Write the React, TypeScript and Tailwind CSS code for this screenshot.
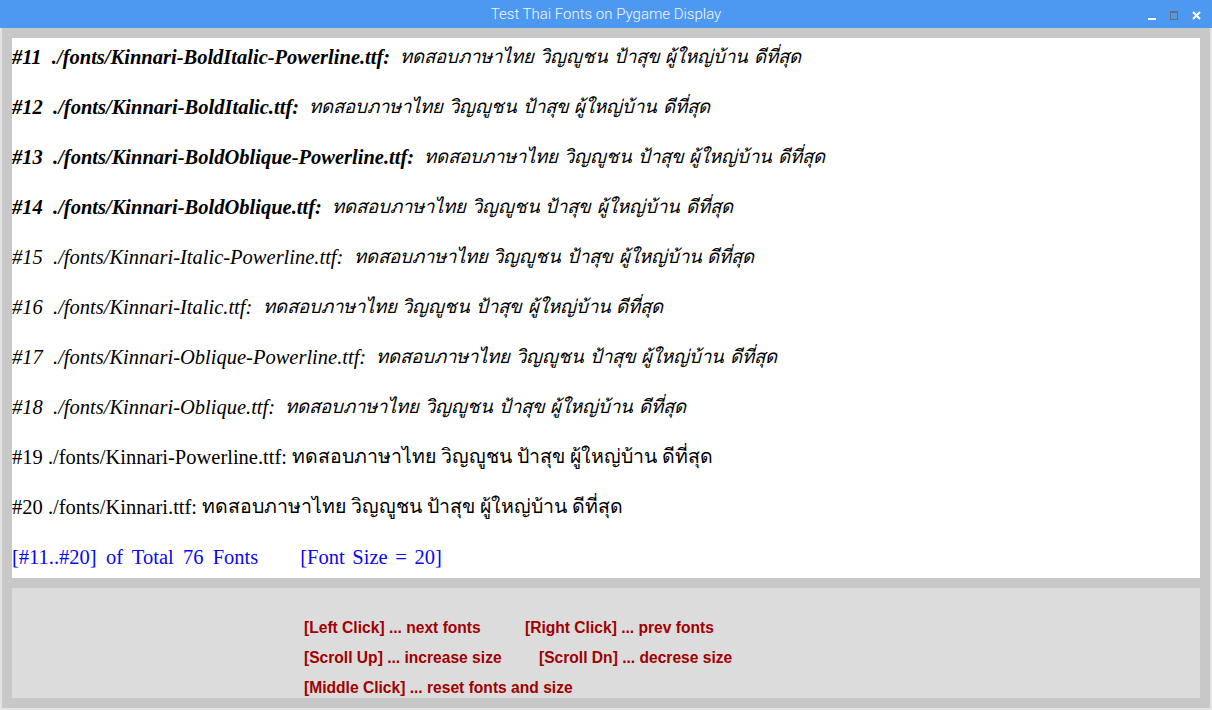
import React from 'react';

const THAI = 'ทดสอบภาษาไทย วิญญูชน ป้าสุข ผู้ใหญ่บ้าน ดีที่สุด';

interface FontRow {
  num: number;
  file: string;
  style: string;
}

const rows: FontRow[] = [
  { num: 11, file: 'Kinnari-BoldItalic-Powerline.ttf', style: 'font-bold italic' },
  { num: 12, file: 'Kinnari-BoldItalic.ttf', style: 'font-bold italic' },
  { num: 13, file: 'Kinnari-BoldOblique-Powerline.ttf', style: 'font-bold italic' },
  { num: 14, file: 'Kinnari-BoldOblique.ttf', style: 'font-bold italic' },
  { num: 15, file: 'Kinnari-Italic-Powerline.ttf', style: 'italic' },
  { num: 16, file: 'Kinnari-Italic.ttf', style: 'italic' },
  { num: 17, file: 'Kinnari-Oblique-Powerline.ttf', style: 'italic' },
  { num: 18, file: 'Kinnari-Oblique.ttf', style: 'italic' },
  { num: 19, file: 'Kinnari-Powerline.ttf', style: '' },
  { num: 20, file: 'Kinnari.ttf', style: '' },
];

const TitleBar = () => (
  <div className="relative flex h-[28px] items-center justify-center bg-[#4d99f2]">
    <span className="font-['Roboto',sans-serif] text-[15px] font-light text-[#f4f8ff]">
      Test Thai Fonts on Pygame Display
    </span>
    {/* window controls */}
    <div className="absolute right-[11px] top-[11px] flex items-center gap-[14px]">
      <div className="mt-[6px] h-[2px] w-[8px] bg-white" />
      <div className="h-[9px] w-[8px] border border-t-2 border-[#6e6e6e]" />
      <svg width="9" height="9" viewBox="0 0 9 9">
        <path d="M1 1 L8 8 M8 1 L1 8" stroke="white" strokeWidth="2" />
      </svg>
    </div>
  </div>
);

export default function App() {
  return (
    <div className="h-[710px] w-[1212px] overflow-hidden bg-[#c8c8c8]">
      <TitleBar />
      <div className="flex flex-col gap-[10px] border-l-2 border-r-2 border-b-2 border-[#e4e4e4] px-[10px] pt-[10px] pb-[10px]">
        {/* font list */}
        <div className="flex h-[540px] flex-col gap-[24px] bg-white pt-[6px] font-['Liberation_Serif',serif] text-[20.5px] text-black">
          {rows.map((r) => (
            <div key={r.num} className={`flex h-[26px] items-center whitespace-pre leading-[26px] ${r.style}`}>
              <span>{r.style ? `#${r.num}  ./fonts/${r.file}:  ` : `#${r.num} ./fonts/${r.file}: `}</span>
              <span className={r.style ? 'text-[18.6px] font-normal [word-spacing:1px]' : 'text-[19.5px] font-normal'}>
                {THAI}
              </span>
            </div>
          ))}
          <div className="flex h-[26px] items-center whitespace-pre leading-[26px] text-[#0808f0]">
            <span className="[word-spacing:-0.5px]">[#11..#20]  of  Total  76  Fonts</span>
            <span className="ml-[42px] [word-spacing:2.5px]">[Font Size = 20]</span>
          </div>
        </div>

        {/* help panel */}
        <div className="flex h-[110px] flex-col bg-[#dcdcdc] pl-[292px] pt-[25px] font-['Liberation_Sans',sans-serif] text-[15.6px] font-bold text-[#a00000]">
          <div className="flex h-[30px] shrink-0 items-center">
            <span className="w-[221px]">[Left Click] ... next fonts</span>
            <span>[Right Click] ... prev fonts</span>
          </div>
          <div className="flex h-[30px] shrink-0 items-center">
            <span className="w-[235px]">[Scroll Up] ... increase size</span>
            <span>[Scroll Dn] ... decrese size</span>
          </div>
          <div className="flex h-[30px] shrink-0 items-center">
            <span>[Middle Click] ... reset fonts and size</span>
          </div>
        </div>
      </div>
    </div>
  );
}
